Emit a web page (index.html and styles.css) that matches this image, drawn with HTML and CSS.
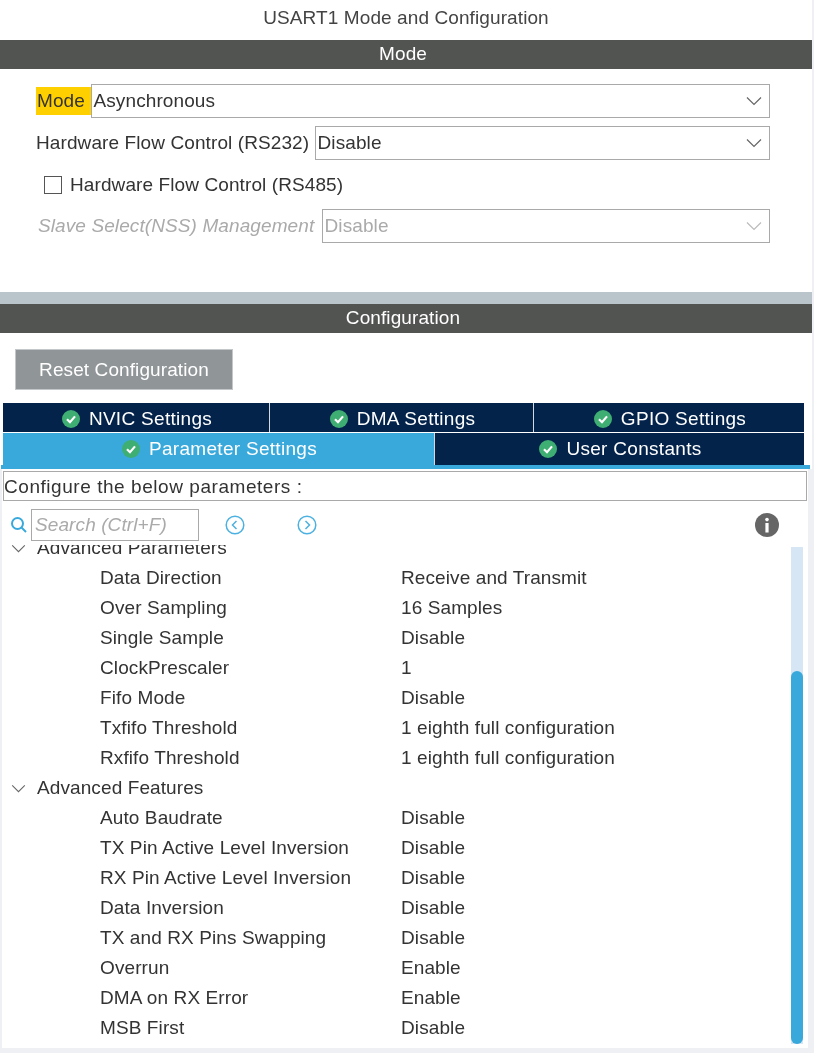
FILE: index.html
```html
<!DOCTYPE html>
<html>
  <head>
    <meta charset="UTF-8" />
    <title>USART1 Mode and Configuration</title>
    <link rel="stylesheet" href="styles.css">
  </head>
  <body>
    <div class="page">
      <div class="top">
        <div class="title">USART1 Mode and Configuration</div>
        <div class="bar">Mode</div>

        <!-- Mode selects -->
        <div class="mode">
          <div class="row row-first">
            <span class="label label-hl">Mode</span>
            <div class="select">
              <span>Asynchronous</span>
              <svg class="chev" viewBox="0 0 16 10"><path d="M1 1.5 8 8.5 15 1.5" /></svg>
            </div>
          </div>
          <div class="row row-second">
            <span class="label label-flow">Hardware Flow Control (RS232)</span>
            <div class="select">
              <span>Disable</span>
              <svg class="chev" viewBox="0 0 16 10"><path d="M1 1.5 8 8.5 15 1.5" /></svg>
            </div>
          </div>
          <div class="check-row">
            <span class="checkbox"></span>
            <span class="label">Hardware Flow Control (RS485)</span>
          </div>
          <div class="row row-disabled">
            <span class="label label-slave">Slave Select(NSS) Management</span>
            <div class="select select-disabled">
              <span>Disable</span>
              <svg class="chev" viewBox="0 0 16 10"><path d="M1 1.5 8 8.5 15 1.5" /></svg>
            </div>
          </div>
        </div>

        <div class="stripe"></div>
        <div class="bar">Configuration</div>

        <button class="reset">Reset Configuration</button>

        <!-- Tabs -->
        <div class="tabs tabs-top">
          <div class="tab tab-nvic"><svg class="ok" viewBox="0 0 18 18"><circle cx="9" cy="9" r="9" /><path d="M5 9.2 8 12.2 13 6.4" /></svg>NVIC Settings</div>
          <div class="tab tab-dma"><svg class="ok" viewBox="0 0 18 18"><circle cx="9" cy="9" r="9" /><path d="M5 9.2 8 12.2 13 6.4" /></svg>DMA Settings</div>
          <div class="tab tab-gpio"><svg class="ok" viewBox="0 0 18 18"><circle cx="9" cy="9" r="9" /><path d="M5 9.2 8 12.2 13 6.4" /></svg>GPIO Settings</div>
        </div>
        <div class="tabs tabs-bottom">
          <div class="tab tab-param active"><svg class="ok" viewBox="0 0 18 18"><circle cx="9" cy="9" r="9" /><path d="M5 9.2 8 12.2 13 6.4" /></svg>Parameter Settings</div>
          <div class="tab tab-user"><svg class="ok" viewBox="0 0 18 18"><circle cx="9" cy="9" r="9" /><path d="M5 9.2 8 12.2 13 6.4" /></svg>User Constants</div>
        </div>
        <div class="tab-line"></div>
      </div>

      <div class="panel">
        <div class="hint">Configure the below parameters :</div>

        <!-- Search row -->
        <div class="search-row">
          <svg class="search-icon" viewBox="0 0 18 18"><circle cx="7.5" cy="7.5" r="5.5" /><path d="M11.5 11.5 16 16" /></svg>
          <div class="search">Search (Ctrl+F)</div>
          <svg class="nav nav-prev" viewBox="0 0 20 20"><circle cx="10" cy="10" r="8.8" /><path d="M11.5 6 7.5 10 11.5 14" /></svg>
          <svg class="nav nav-next" viewBox="0 0 20 20"><circle cx="10" cy="10" r="8.8" /><path d="M8.5 6 12.5 10 8.5 14" /></svg>
          <svg class="info" viewBox="0 0 24 24"><circle cx="12" cy="12" r="12" /><circle class="info-mark" cx="12" cy="6.6" r="1.8" /><rect class="info-mark" x="10.4" y="10" width="3.2" height="9.5" /></svg>
        </div>

        <div class="tree-wrap">
          <div class="tree">
            <div class="group"><svg class="tree-chev" viewBox="0 0 16 10"><path d="M1 1.5 8 8.5 15 1.5" /></svg>Advanced Parameters</div>
            <div class="param"><span class="name">Data Direction</span><span>Receive and Transmit</span></div>
            <div class="param"><span class="name">Over Sampling</span><span>16 Samples</span></div>
            <div class="param"><span class="name">Single Sample</span><span>Disable</span></div>
            <div class="param"><span class="name">ClockPrescaler</span><span>1</span></div>
            <div class="param"><span class="name">Fifo Mode</span><span>Disable</span></div>
            <div class="param"><span class="name">Txfifo Threshold</span><span>1 eighth full configuration</span></div>
            <div class="param"><span class="name">Rxfifo Threshold</span><span>1 eighth full configuration</span></div>
            <div class="group"><svg class="tree-chev" viewBox="0 0 16 10"><path d="M1 1.5 8 8.5 15 1.5" /></svg>Advanced Features</div>
            <div class="param"><span class="name">Auto Baudrate</span><span>Disable</span></div>
            <div class="param"><span class="name">TX Pin Active Level Inversion</span><span>Disable</span></div>
            <div class="param"><span class="name">RX Pin Active Level Inversion</span><span>Disable</span></div>
            <div class="param"><span class="name">Data Inversion</span><span>Disable</span></div>
            <div class="param"><span class="name">TX and RX Pins Swapping</span><span>Disable</span></div>
            <div class="param"><span class="name">Overrun</span><span>Enable</span></div>
            <div class="param"><span class="name">DMA on RX Error</span><span>Enable</span></div>
            <div class="param"><span class="name">MSB First</span><span>Disable</span></div>
          </div>
          <div class="scroll-track"><div class="scroll-thumb"></div></div>
        </div>
      </div>
    </div>
  </body>
</html>
```

FILE: styles.css
```css
html,
body {
  margin: 0;
  padding: 0;
  background-color: #eef0f3;
}

body {
  font-family: "Liberation Sans", Arial, sans-serif;
  font-size: 19px;
  letter-spacing: 0.1px;
  color: #333;
  overflow: hidden;
}

/* the source picture is a soft upscale */
.page {
  width: 812px;
  height: 1048px;
  filter: blur(0.4px);
}

.top {
  background-color: #fff;
}

.title {
  height: 40px;
  line-height: 36px;
  text-align: center;
  color: #444;
}

.bar {
  height: 29px;
  line-height: 28px;
  background-color: #525452;
  color: #fff;
  text-align: center;
  padding-right: 6px;
}

/* Mode section */
.mode {
  height: 223px;
  padding-left: 36px;
  padding-right: 42px;
  box-sizing: border-box;
  padding-top: 15px;
}

.row {
  display: flex;
  align-items: center;
  height: 34px;
  margin-bottom: 8px;
}

.label {
  white-space: nowrap;
}

.label-hl {
  background-color: #ffd000;
  width: 55px;
  height: 28px;
  line-height: 28px;
  flex: none;
  padding-left: 1px;
  box-sizing: border-box;
}

.label-flow {
  width: 279px;
  flex: none;
}

.label-slave {
  width: 286px;
  flex: none;
  font-style: italic;
  color: #aaa;
  padding-left: 2px;
  box-sizing: border-box;
}

.select {
  flex: 1;
  height: 34px;
  box-sizing: border-box;
  border: 1px solid #a9a9a9;
  display: flex;
  align-items: center;
  justify-content: space-between;
  padding: 0 7px 0 1.5px;
  background-color: #fff;
}

.select-disabled {
  color: #aaa;
}

.chev {
  width: 16px;
  height: 10px;
  flex: none;
}

.chev path,
.tree-chev path {
  fill: none;
  stroke: #666;
  stroke-width: 1.2;
}

.select-disabled .chev path {
  stroke: #bbb;
}

.check-row {
  display: flex;
  align-items: center;
  height: 33px;
  margin-bottom: 8px;
  padding-left: 8px;
}

.checkbox {
  width: 18px;
  height: 18px;
  box-sizing: border-box;
  border: 1px solid #555;
  margin-right: 8px;
}

.stripe {
  height: 12px;
  background-color: #b9c4cb;
}

.reset {
  display: block;
  margin: 16px 0 13px 15px;
  width: 218px;
  height: 41px;
  border: 1px solid #c4c7c9;
  background-color: #909598;
  color: #fff;
  font-family: inherit;
  font-size: 19px;
  letter-spacing: 0.1px;
  padding: 0;
}

/* Tabs */
.tabs {
  display: flex;
  margin-left: 3px;
  width: 801px;
}

.tabs-top {
  height: 29px;
  margin-bottom: 1px;
}

.tabs-top .tab {
  padding-top: 2px;
}

.tabs-bottom {
  height: 32px;
}

.tab {
  background-color: #03234b;
  color: #fff;
  display: flex;
  align-items: center;
  justify-content: center;
  letter-spacing: 0.3px;
  box-sizing: border-box;
  padding-left: 2px;
}

.tab-nvic {
  width: 267px;
  border-right: 1px solid #d5d9dd;
}

.tab-dma {
  width: 264px;
  border-right: 1px solid #d5d9dd;
}

.tab-gpio {
  flex: 1;
}

.tab-param {
  width: 432px;
  border-right: 1px solid #d5d9dd;
}

.tab-user {
  flex: 1;
}

.tab.active {
  background-color: #39a9dc;
}

.ok {
  width: 18px;
  height: 18px;
  margin-right: 9px;
  flex: none;
}

.ok circle {
  fill: #3fae73;
}

.ok path {
  fill: none;
  stroke: #fff;
  stroke-width: 2.2;
}

.tab-line {
  height: 4px;
  background-color: #39a9dc;
  margin-left: 1px;
  width: 809px;
}

/* Parameter panel */
.panel {
  width: 806px;
  height: 579px;
  margin-left: 2px;
  background-color: #fff;
  overflow: hidden;
}

.hint {
  margin: 2px 0 0 1px;
  height: 30px;
  line-height: 30px;
  box-sizing: border-box;
  border: 1px solid #a9a9a9;
  padding-left: 0;
  letter-spacing: 0.55px;
  width: 804px;
}

.search-row {
  display: flex;
  align-items: center;
  height: 32px;
  margin-top: 8px;
  padding-left: 8px;
}

.search-icon {
  width: 18px;
  height: 18px;
  flex: none;
  margin-right: 3px;
}

.search-icon circle,
.search-icon path {
  fill: none;
  stroke: #39a9dc;
  stroke-width: 2;
}

.search {
  width: 168px;
  height: 32px;
  box-sizing: border-box;
  border: 1px solid #a9a9a9;
  line-height: 30px;
  padding-left: 3px;
  font-style: italic;
  color: #aaa;
  flex: none;
}

.nav {
  width: 20px;
  height: 20px;
  flex: none;
}

.nav circle,
.nav path {
  fill: none;
  stroke: #4cb1e0;
  stroke-width: 1.5;
}

.nav-prev {
  margin-left: 26px;
}

.nav-next {
  margin-left: 52px;
}

.info {
  width: 24px;
  height: 24px;
  margin-left: 438px;
  flex: none;
}

.info circle {
  fill: #666;
}

.info .info-mark {
  fill: #fff;
}

.tree-wrap {
  display: flex;
  height: 503px;
  margin-top: 4px;
  overflow: hidden;
}

.tree {
  width: 789px;
  margin-top: -12px;
}

.group {
  height: 30px;
  line-height: 30px;
  display: flex;
  align-items: center;
  color: #333;
  padding-left: 9px;
}

.tree-chev {
  width: 15px;
  height: 9px;
  margin-right: 11px;
  flex: none;
}

.param {
  height: 30px;
  line-height: 30px;
  display: flex;
  padding-left: 98px;
}

.name {
  width: 301px;
  flex: none;
}

.scroll-track {
  width: 12px;
  height: 497px;
  margin-top: 2px;
  background-color: #d6e6f4;
  display: flex;
  flex-direction: column;
  justify-content: flex-end;
}

.scroll-thumb {
  height: 373px;
  background-color: #39a9dc;
  border-radius: 6px;
}
```
